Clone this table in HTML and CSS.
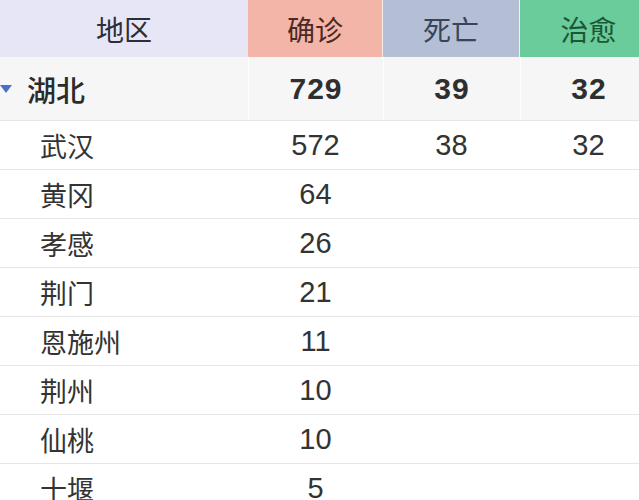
FILE: index.html
```html
<!DOCTYPE html>
<html lang="zh-CN">
<head>
<meta charset="utf-8">
<link rel="stylesheet" href="styles.css">
</head>
<body>
<div class="table">
  <div class="row head">
    <div class="cell c-region">地区</div>
    <div class="cell c-confirm">确诊</div>
    <div class="cell c-dead">死亡</div>
    <div class="cell c-cured">治愈</div>
  </div>
  <div class="row province">
    <div class="cell name"><span class="tri"></span>湖北</div>
    <div class="cell num">729</div>
    <div class="cell num">39</div>
    <div class="cell num">32</div>
  </div>
  <div class="row city">
    <div class="cell name">武汉</div>
    <div class="cell num">572</div>
    <div class="cell num">38</div>
    <div class="cell num">32</div>
  </div>
  <div class="row city">
    <div class="cell name">黄冈</div>
    <div class="cell num">64</div>
    <div class="cell num"></div>
    <div class="cell num"></div>
  </div>
  <div class="row city">
    <div class="cell name">孝感</div>
    <div class="cell num">26</div>
    <div class="cell num"></div>
    <div class="cell num"></div>
  </div>
  <div class="row city">
    <div class="cell name">荆门</div>
    <div class="cell num">21</div>
    <div class="cell num"></div>
    <div class="cell num"></div>
  </div>
  <div class="row city">
    <div class="cell name">恩施州</div>
    <div class="cell num">11</div>
    <div class="cell num"></div>
    <div class="cell num"></div>
  </div>
  <div class="row city">
    <div class="cell name">荆州</div>
    <div class="cell num">10</div>
    <div class="cell num"></div>
    <div class="cell num"></div>
  </div>
  <div class="row city">
    <div class="cell name">仙桃</div>
    <div class="cell num">10</div>
    <div class="cell num"></div>
    <div class="cell num"></div>
  </div>
  <div class="row city">
    <div class="cell name">十堰</div>
    <div class="cell num">5</div>
    <div class="cell num"></div>
    <div class="cell num"></div>
  </div>
</div>
</body>
</html>
```
FILE: styles.css
```css
html, body {
  margin: 0;
  padding: 0;
  background: #ffffff;
  overflow: hidden;
}
body {
  width: 639px;
  height: 500px;
  font-family: "Liberation Sans", "Noto Sans CJK SC", sans-serif;
  color: #333333;
}
.table {
  width: 657px;
}
.row {
  display: grid;
  grid-template-columns: 248px 135px 137px 137px;
}
.cell {
  display: flex;
  align-items: center;
  justify-content: center;
}
.head {
  height: 57px;
}
.head .cell {
  font-size: 28px;
  font-family: "Noto Sans CJK SC", sans-serif;
}
.c-region {
  background: #e6e6f6;
  color: #2e2e36;
}
.c-confirm {
  background: #f3b5a8;
  color: #4a2a25;
  border-right: 1px solid #f3ece8;
}
.c-dead {
  background: #b4bfd5;
  color: #38435c;
  border-right: 1px solid #eef2f6;
}
.c-cured {
  background: #69cc9a;
  color: #1b5637;
}
.province {
  height: 63px;
  background: #f6f6f6;
  border-bottom: 1px solid #e6e6e6;
}
.province .cell + .cell {
  border-left: 1px solid #ffffff;
}
.province .name {
  justify-content: flex-start;
  font-family: "Noto Sans CJK SC", sans-serif;
  font-size: 29px;
  font-weight: 500;
  color: #2b2b2b;
  gap: 15px;
}
.tri {
  width: 0;
  height: 0;
  border-left: 6px solid transparent;
  border-right: 6px solid transparent;
  border-top: 8px solid #4d6fcc;
}
.province .num {
  font-size: 30px;
  font-weight: bold;
  letter-spacing: 1px;
  color: #2f2f2f;
}
.city {
  height: 48px;
  border-bottom: 1px solid #e6e6e6;
}
.city .name {
  justify-content: flex-start;
  padding-left: 40px;
  font-family: "Noto Sans CJK SC", sans-serif;
  font-size: 27px;
  color: #333333;
}
.city .num {
  font-size: 29px;
  color: #333333;
}
```
